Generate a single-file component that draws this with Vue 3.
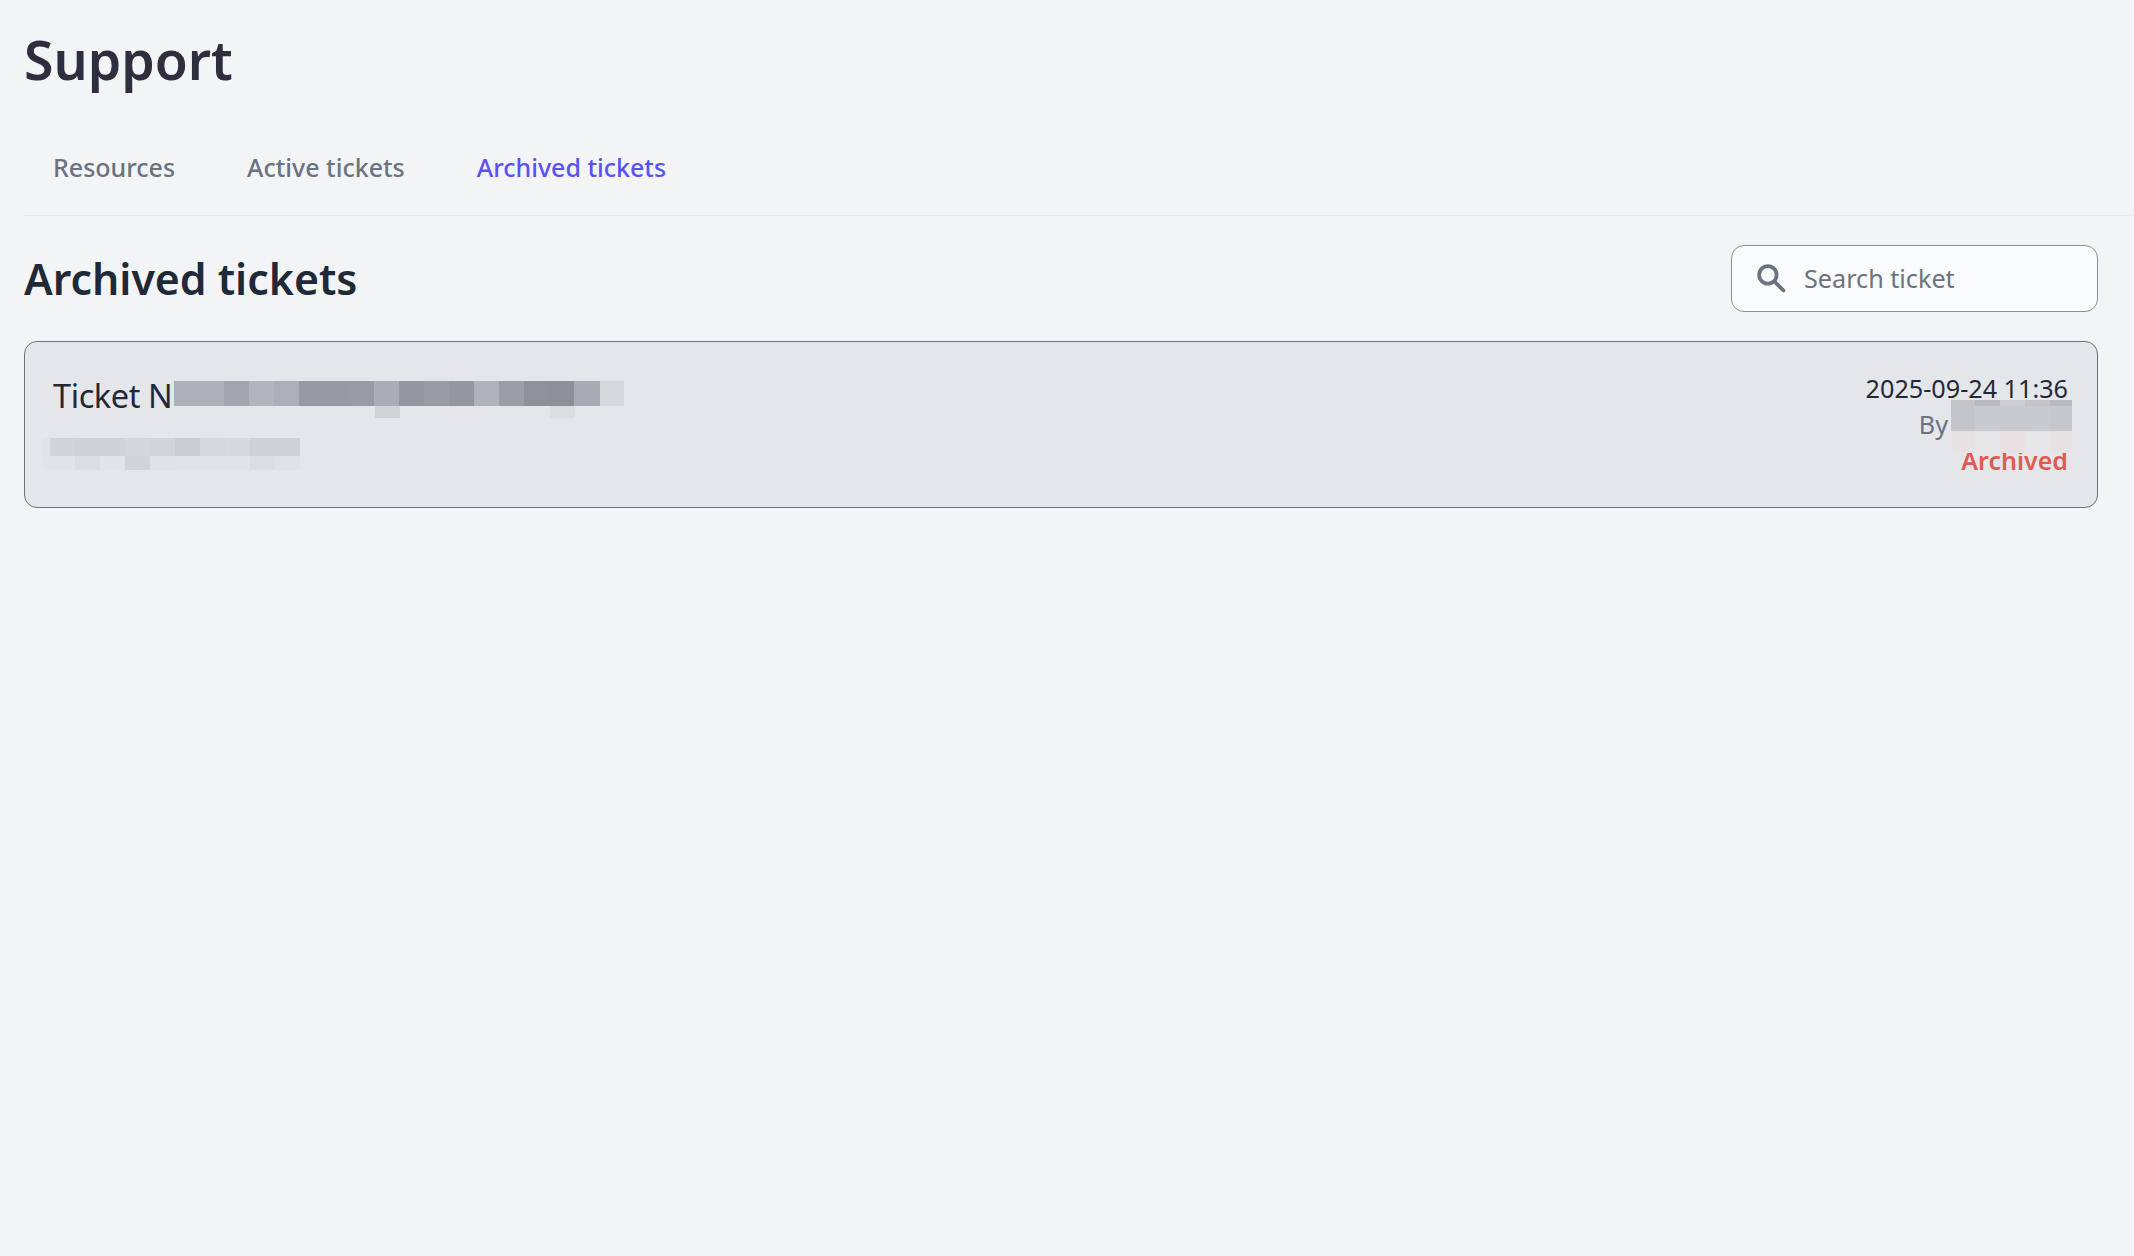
<script setup>
const nameCells = [
  ['#aeb0b8', 25], ['#aeb1b8', 25], ['#a3a6ae', 25], ['#b2b5bc', 25], ['#acafb7', 25], ['#979aa2', 25],
  ['#979aa2', 25], ['#989ba3', 25], ['#aaadb5', 25], ['#94979f', 25], ['#999ca3', 25], ['#93979e', 25],
  ['#b0b3ba', 25], ['#9b9ea5', 25], ['#8e9198', 25], ['#8d9097', 25], ['#a7aab2', 26], ['#d6d7da', 24]
]
const subTop = [
  ['#e2e3e6', 7], ['#d2d3d7', 25], ['#d0d1d5', 25], ['#d0d1d5', 25], ['#d5d6d9', 25], ['#d3d4d8', 25],
  ['#cbccd0', 25], ['#d6d7da', 25], ['#d8d9dc', 25], ['#d0d1d5', 25], ['#d0d1d5', 25]
]
const subBottom = [
  ['#e3e4e7', 7], ['#e2e3e6', 25], ['#dcdde0', 25], ['#e3e4e7', 25], ['#d2d3d7', 25], ['#e0e1e4', 25],
  ['#e2e3e6', 25], ['#e2e3e6', 25], ['#e2e3e6', 25], ['#dcdde0', 25], ['#e1e2e5', 25]
]
const authorRows = [
  { h: 6, cells: ['#c4c5ca', '#b9bac0', '#cccdd2', '#c4c5ca', '#b9bac0'] },
  { h: 25, cells: ['#c4c5ca', '#c9cacf', '#c9cacf', '#c9cacf', '#c6c7cc'] },
  { h: 22, cells: ['#e8e2e5', '#e6e6e9', '#e8e0e3', '#e6e6e9', '#e8e2e5'] }
]
const authorWidths = [24, 25, 25, 25, 22]
</script>

<template>
  <main class="page">
    <h1 class="title">Support</h1>
    <nav class="tabs">
      <a class="tab">Resources</a>
      <a class="tab">Active tickets</a>
      <a class="tab active">Archived tickets</a>
    </nav>
    <div class="content">
      <header class="head">
        <h2 class="heading">Archived tickets</h2>
        <label class="search">
          <svg class="search-icon" viewBox="0 0 24 24" aria-hidden="true">
            <circle cx="9.5" cy="9.5" r="7" />
            <path d="M14.8 14.8 22 22" />
          </svg>
          <span class="placeholder">Search ticket</span>
        </label>
      </header>
      <article class="card">
        <div class="card-left">
          <div class="ticket-name">Ticket No</div>
          <div class="mosaic name-mosaic">
            <div class="mosaic-row main-row">
              <i v-for="(c, i) in nameCells" :key="i" :style="{ background: c[0], width: c[1] + 'px' }"></i>
            </div>
            <div class="mosaic-row tail-row">
              <i class="tail first"></i>
              <i class="tail second"></i>
            </div>
          </div>
          <div class="mosaic sub-mosaic">
            <div class="mosaic-row sub-top">
              <i v-for="(c, i) in subTop" :key="i" :style="{ background: c[0], width: c[1] + 'px' }"></i>
            </div>
            <div class="mosaic-row sub-bottom">
              <i v-for="(c, i) in subBottom" :key="i" :style="{ background: c[0], width: c[1] + 'px' }"></i>
            </div>
          </div>
        </div>
        <div class="card-right">
          <div class="date">2025-09-24 11:36</div>
          <div class="by">By<span class="author-space"></span></div>
          <div class="status">Archived</div>
          <div class="mosaic author-mosaic">
            <div v-for="(r, ri) in authorRows" :key="ri" class="mosaic-row" :style="{ height: r.h + 'px' }">
              <i v-for="(c, i) in r.cells" :key="i" :style="{ background: c, width: authorWidths[i] + 'px' }"></i>
            </div>
          </div>
        </div>
      </article>
    </div>
  </main>
</template>

<style>
html, body {
  margin: 0;
  background: #f3f4f6;
}
</style>

<style scoped>
.page {
  min-height: 1256px;
  box-sizing: border-box;
  padding: 24px 0 0 24px;
  background: #f3f4f6;
  font-family: "Noto Sans", "Open Sans", sans-serif;
}
.title {
  margin: 0;
  height: 72px;
  font-size: 53.6px;
  line-height: 72px;
  font-weight: 600;
  color: #2d2f3e;
}
.tabs {
  display: flex;
  gap: 72px;
  height: 120px;
  box-sizing: border-box;
  padding: 54px 0 0 29px;
  border-bottom: 1px solid #e5e7eb;
}
.tab {
  font-size: 25px;
  line-height: 34px;
  font-weight: 500;
  color: #6b7280;
}
.tab.active {
  color: #5b50f5;
}
.content {
  padding-right: 36px;
}
.head {
  display: flex;
  align-items: center;
  justify-content: space-between;
  height: 67px;
  margin-top: 29px;
}
.heading {
  margin: 0;
  font-size: 42.8px;
  font-weight: 600;
  line-height: 66px;
  color: #1f2937;
}
.search {
  display: flex;
  align-items: center;
  gap: 17px;
  box-sizing: border-box;
  width: 367px;
  height: 67px;
  padding-left: 24px;
  background: #fafbfc;
  border: 1px solid #8a90a2;
  border-radius: 13px;
}
.search-icon {
  width: 30px;
  height: 30px;
  margin-top: -2px;
  margin-right: 1px;
  fill: none;
  stroke: #6b7280;
  stroke-width: 3;
  stroke-linecap: round;
}
.placeholder {
  font-size: 25.2px;
  line-height: 34px;
  margin-top: -1px;
  color: #6b7280;
}
.card {
  position: relative;
  display: flex;
  justify-content: space-between;
  box-sizing: border-box;
  height: 167px;
  margin-top: 29px;
  padding: 0 29px 0 28px;
  background: #e5e6ea;
  border: 1px solid #6b7280;
  border-radius: 13px;
}
.ticket-name {
  margin-top: 31px;
  white-space: nowrap;
  font-size: 32.5px;
  letter-spacing: -0.4px;
  line-height: 46px;
  color: #1f2937;
}
.card-right {
  margin-top: 28px;
  text-align: right;
  font-size: 25.2px;
  line-height: 36px;
}
.date {
  color: #1f2937;
}
.by {
  color: #6b7280;
}
.author-space {
  display: inline-block;
  width: 120px;
}
.status {
  color: #e05a52;
  font-size: 25px;
  font-weight: 600;
}
.mosaic {
  position: absolute;
}
.mosaic-row {
  display: flex;
}
.mosaic-row i {
  display: block;
  height: 100%;
}
.name-mosaic {
  left: 149px;
  top: 39px;
}
.main-row {
  height: 25px;
}
.tail-row {
  position: relative;
  height: 12px;
  background: #e5e6ea;
}
.mosaic-row i.tail {
  position: absolute;
  top: 0;
  width: 25px;
}
.tail.first {
  left: 201px;
  background: #d2d3d7;
}
.tail.second {
  left: 376px;
  background: #dcdde0;
}
.sub-mosaic {
  left: 18px;
  top: 96px;
}
.sub-top {
  height: 18px;
}
.sub-bottom {
  height: 14px;
}
.author-mosaic {
  right: 25px;
  top: 58px;
}
</style>
